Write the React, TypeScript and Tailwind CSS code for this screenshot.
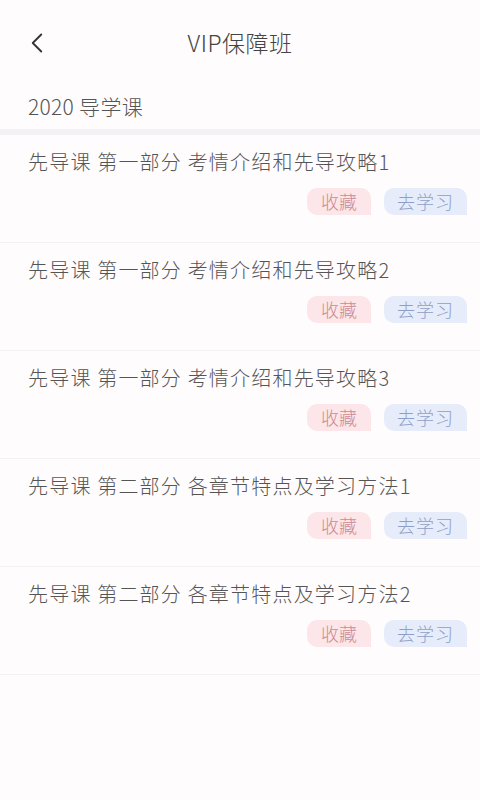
import { ChevronLeft } from "lucide-react";

const lessons = [
  "先导课 第一部分 考情介绍和先导攻略1",
  "先导课 第一部分 考情介绍和先导攻略2",
  "先导课 第一部分 考情介绍和先导攻略3",
  "先导课 第二部分 各章节特点及学习方法1",
  "先导课 第二部分 各章节特点及学习方法2",
];

export default function App() {
  return (
    <div className="min-h-[800px] bg-[#fefcfd] text-[#555] font-['Noto_Sans_CJK_SC',sans-serif]">
      {/* Header */}
      <div className="relative h-[88px] pb-1 flex items-center justify-center">
        <button className="absolute left-[20px] top-[26px] text-[#333]">
          <ChevronLeft size={34} strokeWidth={1.3} />
        </button>
        <h1 className="text-[23px] font-light text-[#444] tracking-[0.5px]">VIP保障班</h1>
      </div>

      {/* Section label */}
      <div className="h-[41px] pb-1 px-7 flex items-center text-[21px] font-light text-[#555] tracking-[0.3px]">
        2020 导学课
      </div>
      <div className="h-[6px] bg-[#f4f1f5]" />

      {/* Lessons */}
      <div>
        {lessons.map((title, i) => (
          <div key={i} className="border-b border-[#f3f1f3] pl-7 pr-[13px] pt-[14px] pb-[27px]">
            <p className="text-[20px] leading-[26px] font-light text-[#555] tracking-[1.2px]">
              {title}
            </p>
            <div className="mt-[13px] flex justify-end gap-[13px]">
              <button className="h-[27px] w-[64px] rounded-[10px] rounded-br-none bg-[#fce6e9] text-[18px] font-light text-[#cf8a90]">
                收藏
              </button>
              <button className="h-[27px] w-[83px] rounded-[10px] rounded-br-none bg-[#e7ecfa] text-[18px] font-light text-[#8e9fc6] tracking-[1px]">
                去学习
              </button>
            </div>
          </div>
        ))}
      </div>
    </div>
  );
}
